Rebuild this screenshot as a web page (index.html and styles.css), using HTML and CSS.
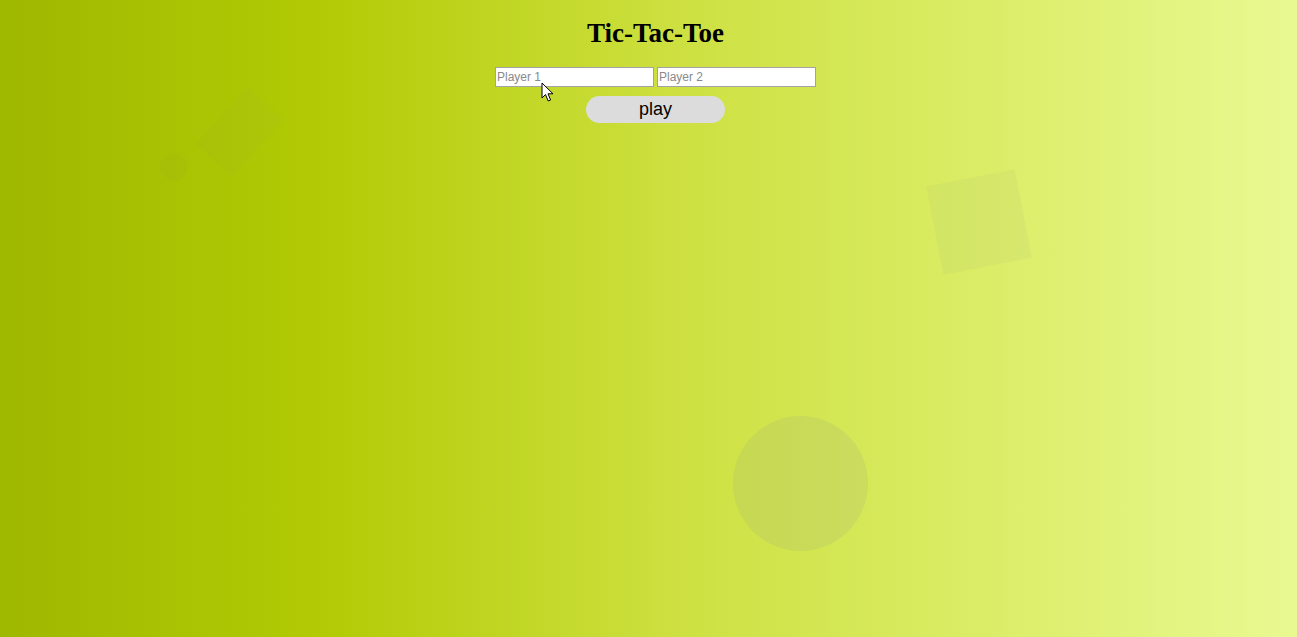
FILE: index.html
```html
<!DOCTYPE html>
<html>
<head>
<meta charset="utf-8">
<title>Tic-Tac-Toe</title>
<link rel="stylesheet" href="styles.css">
</head>
<body>
<div class="bg">
  <div class="shape rect-big"></div>
  <div class="shape rect-small"></div>
  <div class="shape square"></div>
  <div class="shape circle"></div>
</div>
<main class="app">
  <h1 class="title">Tic-Tac-Toe</h1>
  <div class="players">
    <input class="player" type="text" placeholder="Player 1">
    <input class="player" type="text" placeholder="Player 2">
  </div>
  <button class="play">play</button>
</main>
<svg class="cursor" width="14" height="22" viewBox="0 0 14 22"><path d="M1 1 L1 16 L4.5 12.5 L7.2 19 L9.6 18 L7 11.8 L12 11.8 Z" fill="#fff" stroke="#000" stroke-width="1"/></svg>
</body>
</html>
```
FILE: styles.css
```css
html, body {
  margin: 0;
  padding: 0;
  height: 100%;
}
body {
  background: linear-gradient(to right, #9fb800 0%, #b2cb05 25%, #cde040 52%, #dcee6a 78%, #e9f992 100%);
  font-family: "Liberation Serif", serif;
  overflow: hidden;
  position: relative;
}
.bg {
  position: absolute;
  inset: 0;
  pointer-events: none;
}
.shape {
  position: absolute;
  background: rgba(150, 160, 110, 0.045);
}
.rect-big {
  left: 201px;
  top: 107px;
  width: 78px;
  height: 49px;
  transform: rotate(-48deg);
}
.rect-small {
  left: 161px;
  top: 154px;
  width: 26px;
  height: 26px;
  border-radius: 35%;
  transform: rotate(-45deg);
}
.square {
  left: 934px;
  top: 177px;
  width: 90px;
  height: 90px;
  transform: rotate(-11deg);
  background: rgba(170, 180, 130, 0.1);
}
.circle {
  left: 733px;
  top: 416px;
  width: 135px;
  height: 135px;
  border-radius: 50%;
  background: rgba(165, 175, 125, 0.2);
}
.app {
  position: relative;
  display: flex;
  flex-direction: column;
  align-items: center;
  padding-top: 16px;
  padding-left: 14px;
}
.title {
  margin: 0;
  font-size: 27px;
  font-weight: bold;
  line-height: 34px;
  color: #000;
}
.players {
  display: flex;
  gap: 3px;
  margin-top: 17px;
}
.player {
  width: 159px;
  height: 20px;
  box-sizing: border-box;
  border: 1px solid #a3a3a3;
  background: #fff;
  padding: 1px 1px;
  font-family: "Liberation Sans", Arial, sans-serif;
  font-size: 12px;
  margin: 0;
}
.player::placeholder {
  color: #8a8a8a;
}
.play {
  margin-top: 9px;
  width: 139px;
  height: 27px;
  border: none;
  border-radius: 14px;
  background: #dcdcdc;
  font-family: "Liberation Sans", Arial, sans-serif;
  font-size: 18px;
  color: #000;
  padding: 0;
}
.cursor {
  position: absolute;
  left: 541px;
  top: 82px;
}
```
